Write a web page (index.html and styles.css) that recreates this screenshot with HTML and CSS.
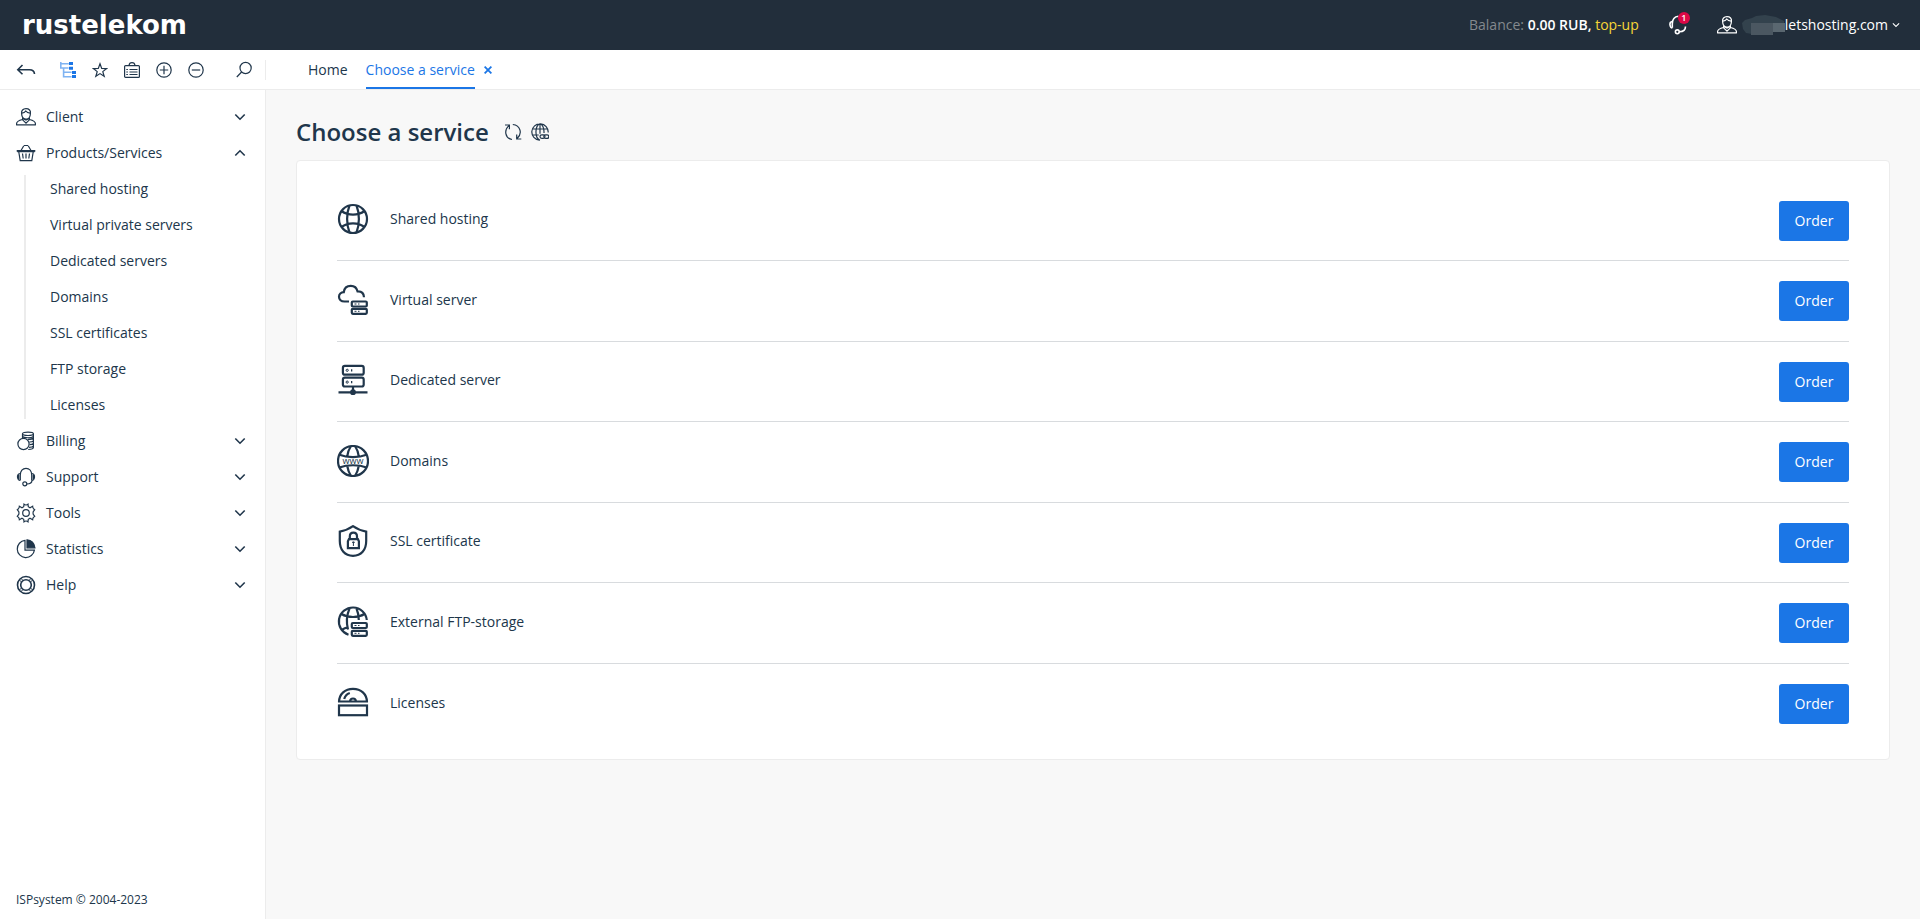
FILE: index.html
```html
<!DOCTYPE html>
<html lang="en">
<head>
    <meta charset="UTF-8">
    <meta name="viewport" content="width=device-width, initial-scale=1.0">
    <title>Choose a service</title>
    <link rel="stylesheet" href="styles.css">
</head>
<body>

    <!-- Shared icons -->
    <svg class="sprite" aria-hidden="true">
        <symbol id="user" viewBox="0 0 20 18">
            <path d="M5.6 5.6C5.2 2.6 7 .7 10 .7s5 1.8 4.4 5C14.200 9 12.500 11.200 10 11.200S5.800 9 5.600 5.600z"/>
            <path d="M5.800 5.200C8 5 9 4.200 9.800 3c1 1.400 2.600 2 4.400 2.200"/>
            <path d="M.6 17.300v-1.800c0-2 2.600-3.200 6-4M19.400 17.300v-1.800c0-2-2.600-3.200-6-4M.3 16.800h19.400"/>
            <path class="solid" d="M6.600 10.200L10 12l3.400-1.800v1.600L10 15.200l-3.400-3.400z"/>
        </symbol>
        <symbol id="chevron" viewBox="0 0 12 8">
            <path d="M1.300 1.500L6 6.200l4.700-4.700"/>
        </symbol>
    </svg>

    <!-- Top bar -->
    <header class="header">
        <a class="logo" href="#">rustelekom</a>
        <div class="balance">Balance: <b>0.00 RUB,</b> <a href="#">top-up</a></div>
        <button class="notify" aria-label="Support messages">
            <svg class="icon bold" width="20" height="20" viewBox="0 0 20 20">
                <path d="M9.500 1.200C5.500 1.500 3.300 4.600 3.300 9v3.800"/>
                <path d="M3.300 6.500C1.200 6.800.8 8.500 1 10s.8 3 2.300 3"/>
                <path d="M16.500 11.500c0 4-2 5.200-6 5.200"/>
                <circle cx="8.300" cy="16.800" r="1.900"/>
            </svg>
            <span class="badge">1</span>
        </button>
        <button class="account">
            <svg class="icon" width="20" height="18"><use href="#user"/></svg>
            <svg class="blob" width="43" height="20" viewBox="0 0 43 20">
                <path fill="#33424d" d="M0 8l3-3 7-2 4-2 9-1 11 2 8 4v9H24l-14 4-6-1-3-4z"/>
                <path fill="#4b5761" d="M9 8h34v9H31v3H9z"/>
                <path fill="#5a6770" d="M31 8h12v9H31z"/>
            </svg>
            <span>letshosting.com</span>
            <svg class="icon bold" width="8" height="6" viewBox="0 0 12 8"><use href="#chevron"/></svg>
        </button>
    </header>

    <!-- Toolbar and tabs -->
    <div class="toolbar">
        <div class="tools">
            <button class="tool tool-back" aria-label="Back">
                <svg class="icon bold" width="20" height="18" viewBox="0 0 20 18">
                    <path d="M6.500 4L1.800 8.700l4.700 4.600M2 8.700h11.500c3 0 4.800 1.300 5 4.300"/>
                </svg>
            </button>
            <button class="tool" aria-label="Menu tree">
                <svg width="16" height="16" viewBox="0 0 16 16">
                    <path fill="none" stroke="#7fb3f2" stroke-width="1.600" d="M.8 0v6h2.800M.8 1.800h8M3.600 6v8.800h8M3.600 6h5M3.600 10.300h8"/>
                    <path fill="#1b76e6" d="M9 0h4v3H9zM9 4.700h4v3H9zM12 9h4v3h-4zM12 13h4v3h-4z"/>
                </svg>
            </button>
            <button class="tool" aria-label="Favourites">
                <svg class="icon" width="16" height="16" viewBox="0 0 16 16">
                    <path d="M8 1.800l1.700 4.600 5 .2-3.900 3 1.400 4.700L8 11.600l-4.200 2.700 1.400-4.700-3.900-3 5-.2z"/>
                </svg>
            </button>
            <button class="tool" aria-label="Task list">
                <svg class="icon" width="16" height="16" viewBox="0 0 16 16">
                    <rect x=".6" y="3.600" width="14.800" height="11.800" rx="1"/>
                    <path d="M5 3.500C5.200 1.500 6.300.7 8 .7s2.800.8 3 2.800M5.500 7.500h8M5.500 10h8M5.500 12.500h8M2.300 7.500h1.600M2.300 10h1.600M2.300 12.500h1.600"/>
                </svg>
            </button>
            <button class="tool" aria-label="Expand all">
                <svg class="icon" width="16" height="16" viewBox="0 0 16 16">
                    <circle cx="8" cy="8" r="7.200"/>
                    <path d="M8 3.800v8.400M3.800 8h8.400"/>
                </svg>
            </button>
            <button class="tool" aria-label="Collapse all">
                <svg class="icon" width="16" height="16" viewBox="0 0 16 16">
                    <circle cx="8" cy="8" r="7.200"/>
                    <path d="M3.800 8h8.400"/>
                </svg>
            </button>
            <button class="tool tool-search" aria-label="Search">
                <svg class="icon" width="16" height="18" viewBox="0 0 16 18">
                    <circle cx="9.600" cy="7" r="5.600"/>
                    <path d="M5.600 11L.8 16"/>
                </svg>
            </button>
        </div>
        <nav class="tabs">
            <a class="tab" href="#">Home</a>
            <a class="tab active" href="#">Choose a service</a>
            <button class="close" aria-label="Close tab">
                <svg width="8" height="8" viewBox="0 0 8 8"><path d="M.6.6l6.800 6.800M7.400.6L.6 7.400"/></svg>
            </button>
        </nav>
    </div>

    <div class="page">
        <!-- Side menu -->
        <aside class="sidebar">
            <nav class="menu">
                <a class="menu-item" href="#">
                    <svg class="icon" width="20" height="18"><use href="#user"/></svg>
                    <span>Client</span>
                    <svg class="icon bold" width="12" height="8"><use href="#chevron"/></svg>
                </a>
                <a class="menu-item open" href="#">
                    <svg class="icon" width="20" height="20" viewBox="0 0 20 20">
                        <path d="M1.300 8.700h17.400M1.300 8.700v-1h17.400v1M2.800 9l1.400 8.700h11.600L17.200 9M5 7.500L7.800 2.700M15 7.500l-2.800-4.800M8 2.500h4M6.500 10.500l.7 5M10 10.500v5M13.500 10.500l-.7 5"/>
                    </svg>
                    <span>Products/Services</span>
                    <svg class="icon bold" width="12" height="8"><use href="#chevron"/></svg>
                </a>
                <div class="submenu">
                    <a href="#">Shared hosting</a>
                    <a href="#">Virtual private servers</a>
                    <a href="#">Dedicated servers</a>
                    <a href="#">Domains</a>
                    <a href="#">SSL certificates</a>
                    <a href="#">FTP storage</a>
                    <a href="#">Licenses</a>
                </div>
                <a class="menu-item" href="#">
                    <svg class="icon" width="20" height="20" viewBox="0 0 20 20">
                        <circle cx="7.500" cy="13" r="5.600"/>
                        <path d="M6.500 7V2.800c0-1 2.500-1.700 5.500-1.700s5.400.7 5.400 1.700v13.800c0 1-2 1.800-5.200 1.900M6.500 2.800c0 1 2.500 1.700 5.500 1.700s5.400-.7 5.400-1.700M6.500 5.300c1.300 1.900 9 1.900 10.900 0M12 8.300c2.500 0 4.700-.5 5.400-1.300M13.500 11c1.800-.1 3.200-.5 3.900-1.200M13.600 13.700c1.800-.1 3.100-.5 3.800-1.200M13 16.300c2-.1 3.800-.5 4.400-1.200"/>
                    </svg>
                    <span>Billing</span>
                    <svg class="icon bold" width="12" height="8"><use href="#chevron"/></svg>
                </a>
                <a class="menu-item" href="#">
                    <svg class="icon" width="20" height="20" viewBox="0 0 20 20">
                        <path d="M4.300 13.300V8c0-4 2.300-6.700 5.700-6.700S15.700 4 15.700 8v5.300"/>
                        <path d="M4 6.500C2 7 1.300 8.500 1.500 10.200 1.700 12 2.500 13.300 4.300 13.300M2.800 8v4M16 6.500c2 .5 2.700 2 2.500 3.700-.2 1.800-1 3.100-2.800 3.100M17.200 8v4"/>
                        <path d="M16 13.300c0 2.600-1.400 3.700-5.200 3.700"/>
                        <circle cx="8.800" cy="16.800" r="2"/>
                    </svg>
                    <span>Support</span>
                    <svg class="icon bold" width="12" height="8"><use href="#chevron"/></svg>
                </a>
                <a class="menu-item" href="#">
                    <svg class="icon" width="20" height="20" viewBox="0 0 20 20">
                        <circle cx="10" cy="10" r="3.300"/>
                        <path d="M7.700 3.700L8 1.200C9 2.200 11 2.200 12 1.200l.3 2.500 1.700 1 2.600-1.500c0 1.600.8 2.800 2.100 3.500l-1.600 2.200v2.200l1.600 2.200c-1.300.7-2.100 1.900-2.100 3.500L14 15.300l-1.700 1-.3 2.500c-1-1-3-1-4 0l-.3-2.500-1.700-1-2.600 1.500c0-1.600-.8-2.800-2.100-3.500l1.600-2.200V8.900L1.300 6.700C2.600 6 3.400 4.800 3.400 3.200L6 4.700z"/>
                    </svg>
                    <span>Tools</span>
                    <svg class="icon bold" width="12" height="8"><use href="#chevron"/></svg>
                </a>
                <a class="menu-item" href="#">
                    <svg class="icon" width="20" height="20" viewBox="0 0 20 20">
                        <path d="M9 1.400a8.600 8.600 0 1 0 9.400 9.700H9z"/>
                        <path class="solid" d="M11 .8c4.300.1 7.600 3.300 7.900 8H11z"/>
                    </svg>
                    <span>Statistics</span>
                    <svg class="icon bold" width="12" height="8"><use href="#chevron"/></svg>
                </a>
                <a class="menu-item" href="#">
                    <svg class="icon bold" width="20" height="20" viewBox="0 0 20 20">
                        <circle cx="10" cy="10" r="8.500"/>
                        <circle cx="10" cy="10" r="5.300"/>
                        <path class="thin" d="M3.500 5.300l2 1.500M5.300 3.500l1.500 2M16.500 5.300l-2 1.500M14.700 3.500l-1.500 2M3.500 14.700l2-1.500M5.300 16.500l1.500-2M16.500 14.700l-2-1.500M14.700 16.500l-1.500-2"/>
                    </svg>
                    <span>Help</span>
                    <svg class="icon bold" width="12" height="8"><use href="#chevron"/></svg>
                </a>
            </nav>
            <footer class="copyright">ISPsystem © 2004-2023</footer>
        </aside>

        <!-- Services -->
        <main class="content">
            <div class="heading">
                <h1>Choose a service</h1>
                <button class="tool-small" aria-label="Reload">
                    <svg class="icon" width="18" height="18" viewBox="0 0 18 18">
                        <path d="M8 16.500C1.200 15.300-.4 7.200 5 2.600M1 2h4.400v4.200M8.800 1.500c7.500.6 10 9 4.300 14M17.300 16h-4.600v-4.400"/>
                    </svg>
                </button>
                <button class="tool-small" aria-label="Page link">
                    <svg class="icon" width="18" height="18" viewBox="0 0 18 18">
                        <path d="M8.500 17.200A8.200 8.200 0 1 1 17.200 9.500M9 17.200C3.600 15 3.600 3 9 .8c2.600 1.200 4.200 4.800 4 9.200M1.200 6h15.600M1.200 12h6.500M9 .8v10"/>
                        <rect x="9" y="11.800" width="5" height="3.600" rx="1.800"/>
                        <rect x="12.800" y="11.800" width="5" height="3.600" rx="1.800"/>
                    </svg>
                </button>
            </div>

            <div class="card">
                <div class="service">
                    <svg class="icon thick" width="32" height="32" viewBox="0 0 32 32">
                        <circle cx="16" cy="16" r="14"/>
                        <path d="M12.500 2.500C9.300 10.500 9.300 21.500 12.500 29.500M19.500 2.500c3.200 8 3.200 19 0 27M4.500 8c6.500 4.800 16.500 4.800 23 0M4.500 24c6.500-4.800 16.500-4.800 23 0"/>
                    </svg>
                    <span>Shared hosting</span>
                    <button class="order">Order</button>
                </div>
                <div class="service">
                    <svg class="icon thick" width="32" height="32" viewBox="0 0 32 32">
                        <path d="M12 17.500H7.500C4 17.500 2 15.500 2 12.800s2-4.600 4.800-4.700C7.300 4 10 1.800 13.800 1.800c3.500 0 6 2.200 6.800 5.600 4-.2 6.200 2.200 6.400 5.800"/>
                        <rect x="14.800" y="17.500" width="15" height="5" rx="1"/>
                        <rect x="14.800" y="24.800" width="15" height="5" rx="1"/>
                        <path class="thin" d="M17.500 20h2M21 20h1.500M17.500 27.300h2M21 27.300h1.500"/>
                    </svg>
                    <span>Virtual server</span>
                    <button class="order">Order</button>
                </div>
                <div class="service">
                    <svg class="icon thick" width="32" height="32" viewBox="0 0 32 32">
                        <rect x="5.900" y="1.900" width="20.800" height="8.800" rx="2"/>
                        <rect x="5.900" y="13.700" width="20.800" height="8.800" rx="2"/>
                        <path d="M16 22.500v5.500M1.500 28.300h29"/>
                        <circle class="solid" cx="16" cy="28.200" r="1.800"/>
                        <circle class="thin" cx="10.200" cy="6.300" r="1.100"/>
                        <circle class="thin" cx="10.200" cy="18.100" r="1.100"/>
                        <path d="M14 6.300h1.300M14 18.100h1.300"/>
                    </svg>
                    <span>Dedicated server</span>
                    <button class="order">Order</button>
                </div>
                <div class="service">
                    <svg class="icon thick" width="32" height="32" viewBox="0 0 32 32">
                        <circle cx="16" cy="16" r="15"/>
                        <path d="M2.500 9.800c7.500 3 19.500 3 27 0M2.500 22.500c7.500-3 19.500-3 27 0M10.200 11.300C10.800 7.500 12 4 13.700 1.500M21.800 11.300C21.200 7.500 20 4 18.300 1.500M10.200 20.800c.6 3.700 1.800 7 3.500 9.700M21.800 20.800c-.6 3.700-1.800 7-3.500 9.700"/>
                        <text x="16" y="19" text-anchor="middle">www</text>
                    </svg>
                    <span>Domains</span>
                    <button class="order">Order</button>
                </div>
                <div class="service">
                    <svg class="icon thick" width="32" height="32" viewBox="0 0 32 32">
                        <path d="M16 1.200c3.800 2.700 8 4.600 13.200 5.400V16c0 9-5 14.800-13.200 14.800S2.800 25 2.800 16V6.600C8 5.800 12.200 3.900 16 1.200z"/>
                        <path d="M11.900 14.200h9l1 2v6.900h-11v-6.900zM12.800 14v-2.600c0-2.200 1.400-3.700 3.600-3.700s3.600 1.500 3.600 3.700V14"/>
                        <path class="thin" d="M15 17.300h2.800M16.400 16.500v4.500"/>
                    </svg>
                    <span>SSL certificate</span>
                    <button class="order">Order</button>
                </div>
                <div class="service">
                    <svg class="icon thick" width="32" height="32" viewBox="0 0 32 32">
                        <path d="M11.500 28.800A14 14 0 1 1 29.800 14M12.500 2.500c-3 7-3.300 14-1.500 21M19.500 2.500c1.500 3.600 2.200 7.500 2.300 11.500M4.500 8c6.500 4 16.500 4 23 0M4.500 24c2-1.300 4-2.200 7-2.800"/>
                        <rect x="14.800" y="17" width="15" height="5" rx="1"/>
                        <rect x="14.800" y="24.800" width="15" height="5" rx="1"/>
                        <path class="thin" d="M17.500 19.500h2M21 19.500h1.500M17.500 27.300h2M21 27.300h1.500"/>
                    </svg>
                    <span>External FTP-storage</span>
                    <button class="order">Order</button>
                </div>
                <div class="service">
                    <svg class="icon thick" width="32" height="32" viewBox="0 0 32 32">
                        <path d="M2 14.800C2.300 7 8 1.800 16 1.800S29.700 7 30 14.800M1 14.500h30M13 14.500c.3-4 5.700-4 6 0M7.200 12c.8-3 2.700-5 5.600-6"/>
                        <rect x="2" y="18.500" width="28" height="9.700"/>
                    </svg>
                    <span>Licenses</span>
                    <button class="order">Order</button>
                </div>
            </div>
        </main>
    </div>

</body>
</html>
```
FILE: styles.css
```css
* {
    box-sizing: border-box;
}

body {
    margin: 0;
    min-height: 100vh;
    display: flex;
    flex-direction: column;
    font-family: 'Open Sans', sans-serif;
    font-size: 14px;
    line-height: 20px;
    color: #20364b;
    background: #ffffff;
}

a {
    color: inherit;
    text-decoration: none;
}

button {
    padding: 0;
    border: none;
    background: none;
    font: inherit;
    color: inherit;
    cursor: pointer;
}

svg {
    display: block;
    flex: none;
}

/* Icons */
.sprite {
    display: none;
}

.icon {
    fill: none;
    stroke: currentColor;
    stroke-width: 1.2;
}

.icon.bold {
    stroke-width: 1.6;
}

.icon.thick {
    stroke-width: 2.2;
}

.icon .thin {
    stroke-width: 1;
}

.icon .solid {
    fill: currentColor;
}

.icon text {
    fill: currentColor;
    stroke: none;
    font-size: 9px;
}

/* Top bar */
.header {
    display: flex;
    align-items: center;
    height: 50px;
    padding: 0 20px 0 22px;
    background: #222e3b;
    color: #ffffff;
}

.logo {
    margin-right: auto;
    font-family: 'DejaVu Sans', sans-serif;
    font-size: 26px;
    font-weight: bold;
    line-height: 50px;
}

.balance {
    color: #84898e;
}

.balance b {
    font-weight: 600;
    color: #ffffff;
}

.balance a {
    font-weight: 500;
    color: #f6d637;
}

.notify {
    position: relative;
    margin: 0 28px 0 30px;
}

.badge {
    position: absolute;
    top: -3px;
    right: -1px;
    width: 12px;
    height: 12px;
    border-radius: 50%;
    background: #dc0846;
    font-size: 9px;
    font-weight: 600;
    line-height: 12px;
    text-align: center;
}

.account {
    display: flex;
    align-items: center;
    font-weight: 500;
}

.blob {
    margin-left: 5px;
}

.account span {
    margin-right: 4px;
}

/* Toolbar */
.toolbar {
    display: flex;
    height: 40px;
    border-bottom: 1px solid #ececec;
}

.tools {
    display: flex;
    align-items: center;
    width: 266px;
    padding-left: 10px;
}

.tools::after {
    content: "";
    width: 1px;
    height: 20px;
    margin-left: auto;
    background: #ececec;
}

.tool {
    display: flex;
    justify-content: center;
    width: 32px;
}

.tool-back {
    margin-right: 10px;
}

.tool-search {
    margin-left: 16px;
}

.tabs {
    display: flex;
    align-items: stretch;
    gap: 18px;
    padding-left: 42px;
}

.tab {
    line-height: 40px;
}

.tab.active {
    color: #1b76e6;
    border-bottom: 2px solid #1b76e6;
}

.close {
    margin-left: -9px;
}

.close path {
    stroke: #1b76e6;
    stroke-width: 1.8;
}

.page {
    flex: 1;
    display: flex;
}

/* Side menu */
.sidebar {
    display: flex;
    flex-direction: column;
    width: 266px;
    padding-top: 9px;
    border-right: 1px solid #ececec;
}

.menu-item {
    display: flex;
    align-items: center;
    gap: 10px;
    height: 36px;
    padding: 0 19px 0 16px;
}

.menu-item span {
    flex: 1;
}

.menu-item.open svg:last-child {
    transform: rotate(180deg);
}

.submenu {
    display: flex;
    flex-direction: column;
    margin: 4px 0 4px 24px;
    border-left: 2px solid #ececec;
    padding-left: 24px;
}

.submenu a {
    line-height: 36px;
}

.submenu a:first-child {
    margin-top: -4px;
}

.submenu a:last-child {
    margin-bottom: -4px;
}

.copyright {
    margin-top: auto;
    padding: 0 16px 9px;
    font-size: 12px;
}

/* Content */
.content {
    flex: 1;
    padding: 22px 30px 30px;
    background: #f8f8f8;
}

.heading {
    display: flex;
    align-items: center;
    gap: 9px;
    height: 40px;
    margin-bottom: 8px;
}

h1 {
    margin: 0 6px 0 0;
    font-size: 24px;
    font-weight: 600;
}

.card {
    padding: 20px 40px 15px;
    border: 1px solid #ececec;
    border-radius: 4px;
    background: #ffffff;
}

.service {
    display: flex;
    align-items: center;
    gap: 21px;
    height: 80px;
    border-bottom: 1px solid #d8dbde;
}

.service:nth-child(even) {
    height: 81px;
}

.service:last-child {
    border-bottom: none;
}

.service svg,
.service span {
    margin-bottom: 3px;
}

.service span {
    flex: 1;
}

.order {
    width: 70px;
    height: 40px;
    border-radius: 3px;
    background: #1b76e6;
    color: #ffffff;
    font-weight: 500;
}

.order:hover {
    background: #1566ca;
}
```
